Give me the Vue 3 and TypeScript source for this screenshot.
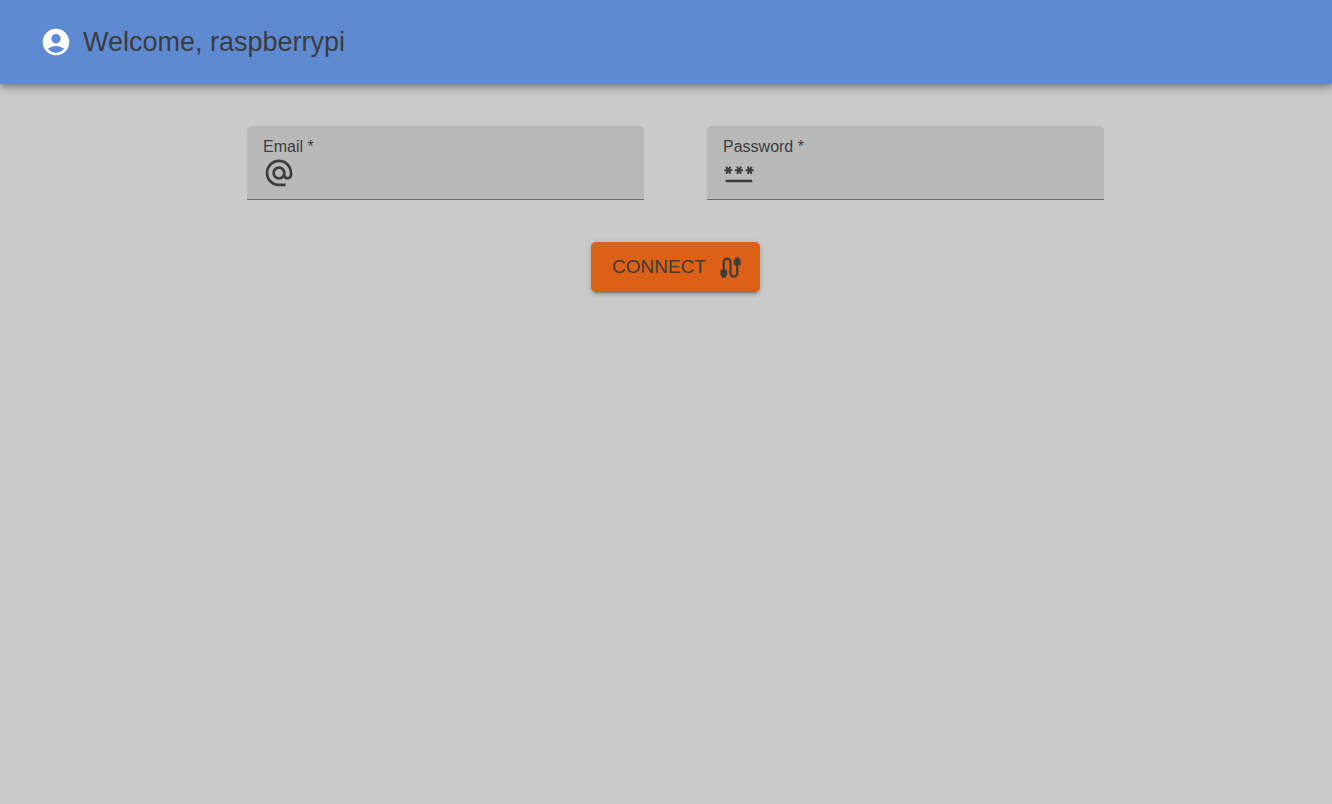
<script setup lang="ts">
import { ref } from 'vue'

const host = 'raspberrypi'
const email = ref('')
const password = ref('')
</script>

<template>
  <div class="page">
    <header class="bar">
      <svg class="icon" viewBox="0 0 24 24" aria-hidden="true">
        <path d="M12 2C6.48 2 2 6.48 2 12s4.48 10 10 10 10-4.48 10-10S17.52 2 12 2m0 4c1.93 0 3.5 1.57 3.5 3.5S13.93 13 12 13s-3.5-1.57-3.5-3.5S10.07 6 12 6m0 14c-2.03 0-4.43-.82-6.14-2.88C7.55 15.8 9.68 15 12 15s4.45.8 6.14 2.12C16.43 19.18 14.03 20 12 20" />
      </svg>
      <h1 class="title">Welcome, {{ host }}</h1>
    </header>
    <main class="content">
      <form class="form" @submit.prevent>
        <div class="fields">
          <div class="field">
            <label class="label" for="email">Email *</label>
            <div class="entry">
              <svg class="icon" viewBox="0 0 24 24" aria-hidden="true">
                <path d="M12 1.95c-5.52 0-10 4.48-10 10s4.48 10 10 10h5v-2h-5c-4.34 0-8-3.66-8-8s3.66-8 8-8 8 3.66 8 8v1.43c0 .79-.71 1.57-1.5 1.57s-1.5-.78-1.5-1.57v-1.43c0-2.76-2.24-5-5-5s-5 2.24-5 5 2.24 5 5 5c1.38 0 2.64-.56 3.54-1.47.65.89 1.77 1.47 2.96 1.47 1.97 0 3.5-1.6 3.5-3.57v-1.43c0-5.52-4.48-10-10-10m0 13c-1.66 0-3-1.34-3-3s1.34-3 3-3 3 1.34 3 3-1.34 3-3 3" />
              </svg>
              <input id="email" v-model="email" class="input" type="email" required />
            </div>
          </div>
          <div class="field">
            <label class="label" for="password">Password *</label>
            <div class="entry">
              <svg class="icon" viewBox="0 0 24 24" aria-hidden="true">
                <path d="M2 17h20v2H2zm1.15-4.05L4 11.47l.85 1.48 1.3-.75-.85-1.48H7v-1.5H5.3l.85-1.47L4.85 7 4 8.47 3.15 7l-1.3.75.85 1.47H1v1.5h1.7l-.85 1.48zm6.7-.75 1.3.75.85-1.48.85 1.48 1.3-.75-.85-1.48H15v-1.5h-1.7l.85-1.47-1.3-.75L12 8.47 11.15 7l-1.3.75.85 1.47H9v1.5h1.7zM23 9.22h-1.7l.85-1.47-1.3-.75L20 8.47 19.15 7l-1.3.75.85 1.47H17v1.5h1.7l-.85 1.48 1.3.75.85-1.48.85 1.48 1.3-.75-.85-1.48H23z" />
              </svg>
              <input id="password" v-model="password" class="input" type="password" required />
            </div>
          </div>
        </div>
        <button class="connect" type="submit">
          Connect
          <svg class="cable" viewBox="0 0 24 24" aria-hidden="true">
            <path d="M20 5V4c0-.55-.45-1-1-1h-2c-.55 0-1 .45-1 1v1h-1v4c0 .55.45 1 1 1h1v7c0 1.1-.9 2-2 2s-2-.9-2-2V7c0-2.21-1.79-4-4-4S5 4.79 5 7v7H4c-.55 0-1 .45-1 1v4h1v1c0 .55.45 1 1 1h2c.55 0 1-.45 1-1v-1h1v-4c0-.55-.45-1-1-1H7V7c0-1.1.9-2 2-2s2 .9 2 2v10c0 2.21 1.79 4 4 4s4-1.79 4-4v-7h1c.55 0 1-.45 1-1V5z" />
          </svg>
        </button>
      </form>
    </main>
  </div>
</template>

<style>
body {
  margin: 0;
  background: #cacaca;
}
</style>

<style scoped>
.page {
  min-height: 100vh;
  color: #3c3c3c;
  font-family: "Liberation Sans", Arial, sans-serif;
}

.bar {
  display: flex;
  align-items: center;
  gap: 11px;
  height: 84px;
  padding: 0 40px;
  box-sizing: border-box;
  background: #5e8ad2;
  box-shadow:
    0 3px 5px -1px rgba(0, 0, 0, 0.2),
    0 5px 7px rgba(0, 0, 0, 0.14),
    0 1px 13px rgba(0, 0, 0, 0.12);
}

.icon {
  flex: none;
  width: 32px;
  height: 32px;
  fill: currentColor;
}

.bar .icon {
  color: #fff;
}

.title {
  margin: 0;
  font-size: 27px;
  font-weight: 400;
  line-height: 42px;
}

.content {
  padding: 42px 0 42px 19px;
}

.form {
  display: flex;
  flex-direction: column;
  align-items: center;
  gap: 42px;
  max-width: 857px;
  margin: 0 auto;
}

.fields {
  display: flex;
  gap: 63px;
  width: 100%;
}

.field {
  flex: 1;
  min-width: 0;
  padding: 11px 16px 10px;
  border-bottom: 1px solid #6e6e6e;
  border-radius: 5px 5px 0 0;
  background: #b9b9b9;
}

.label {
  display: block;
  font-size: 16px;
  line-height: 20px;
}

.entry {
  display: flex;
  align-items: center;
  gap: 11px;
}

.input {
  flex: 1;
  min-width: 0;
  height: 32px;
  padding: 0;
  border: 0;
  outline: 0;
  background: transparent;
  color: inherit;
  font: inherit;
  font-size: 21px;
}

.connect {
  display: flex;
  align-items: center;
  gap: 11px;
  padding: 11px 16px 11px 21px;
  border: 0;
  border-radius: 5px;
  background: #dc6016;
  box-shadow:
    0 4px 1px -3px rgba(0, 0, 0, 0.2),
    0 3px 3px rgba(0, 0, 0, 0.14),
    0 1px 7px rgba(0, 0, 0, 0.12);
  color: #3c3c3c;
  font: inherit;
  font-size: 19px;
  line-height: 28px;
  text-transform: uppercase;
  cursor: pointer;
}

.cable {
  width: 27px;
  height: 27px;
  fill: currentColor;
}
</style>
